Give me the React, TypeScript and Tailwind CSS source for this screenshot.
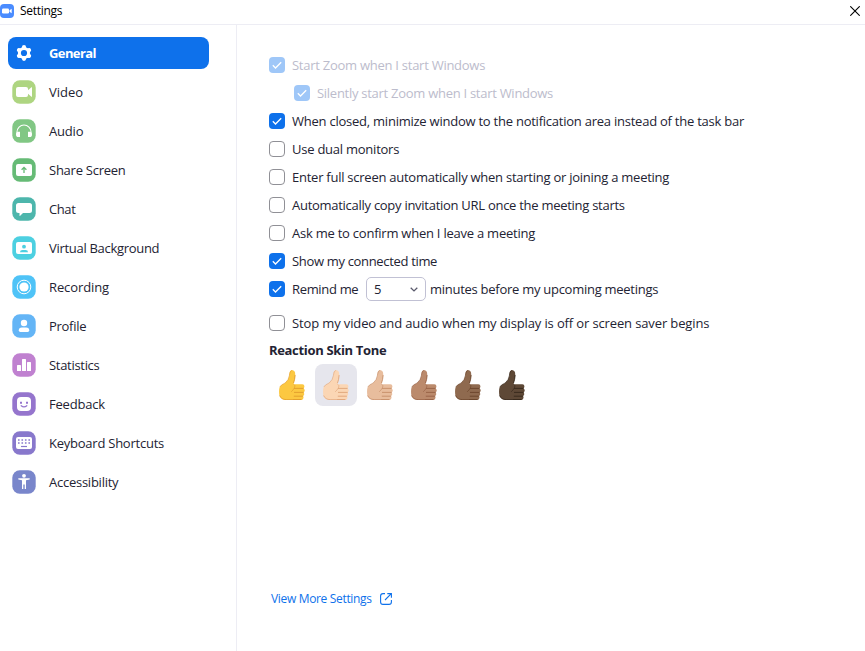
import type { ReactNode } from 'react';

const W = '#fff';

type NavItem = { label: string; color: string; tracking: string; icon: ReactNode };

const navItems: NavItem[] = [
  {
    label: 'Video', color: '#aed581', tracking: 'tracking-normal',
    icon: (
      <>
        <rect x="4" y="7" width="12" height="10" rx="2" fill={W} />
        <path d="M16 10.300 19.400 7.300Q20 7 20 7.600v8.800q0 .6-.6.3L16 13.700z" fill={W} />
      </>
    ),
  },
  {
    label: 'Audio', color: '#81c784', tracking: 'tracking-[-0.2px]',
    icon: (
      <>
        <path d="M5 15.500V13a7 7 0 0 1 14 0v2.500" fill="none" stroke={W} strokeWidth="1.100" />
        <path d="M8 12.700v5.300H6.500Q4 18 4 15.400 4 12.700 6.500 12.700zM16 12.700v5.300h1.500q2.500 0 2.500-2.600 0-2.700-2.500-2.700z" fill={W} />
      </>
    ),
  },
  {
    label: 'Share Screen', color: '#66bb76', tracking: 'tracking-[-0.25px]',
    icon: (
      <>
        <rect x="4" y="6" width="16" height="12" rx="2" fill={W} />
        <path d="M12 15v-5.300M9.600 11.800 12 9.500l2.400 2.300" fill="none" stroke="#66bb76" strokeWidth="1.300" />
      </>
    ),
  },
  {
    label: 'Chat', color: '#4db6ac', tracking: 'tracking-[-0.4px]',
    icon: <path d="M6.500 6h11Q20 6 20 8.500v5q0 2.500-2.500 2.500H11l-2.800 2.700Q7.500 19.200 7.500 18.400V16h-1Q4 16 4 13.500v-5Q4 6 6.500 6z" fill={W} />,
  },
  {
    label: 'Virtual Background', color: '#4dd0e1', tracking: 'tracking-[-0.3px]',
    icon: (
      <>
        <rect x="4" y="6" width="16" height="12" rx="2" fill={W} />
        <circle cx="12" cy="10.700" r="1.900" fill="#4dd0e1" />
        <path d="M8 16.300q0-2.300 2.500-2.300h3q2.500 0 2.500 2.300z" fill="#4dd0e1" />
      </>
    ),
  },
  {
    label: 'Recording', color: '#4fc3f7', tracking: 'tracking-[-0.1px]',
    icon: (
      <>
        <circle cx="12" cy="12" r="6.800" fill="none" stroke={W} strokeWidth="1" />
        <circle cx="12" cy="12" r="4.600" fill={W} />
      </>
    ),
  },
  {
    label: 'Profile', color: '#64b5f6', tracking: 'tracking-[-0.28px]',
    icon: (
      <>
        <circle cx="12" cy="9" r="3.200" fill={W} />
        <path d="M6.800 16.200q0-2.700 3-2.700h4.400q3 0 3 2.700 0 1.800-1.500 1.800H8.300q-1.500 0-1.500-1.800z" fill={W} />
      </>
    ),
  },
  {
    label: 'Statistics', color: '#c081d0', tracking: 'tracking-[-0.3px]',
    icon: (
      <>
        <rect x="5" y="12" width="4" height="6" rx=".6" fill={W} />
        <rect x="10" y="6" width="4" height="12" rx=".6" fill={W} />
        <rect x="15" y="9" width="4" height="9" rx=".6" fill={W} />
      </>
    ),
  },
  {
    label: 'Feedback', color: '#9575cd', tracking: 'tracking-[-0.2px]',
    icon: (
      <>
        <rect x="5" y="5" width="14" height="14" rx="4" fill={W} />
        <path d="M8 9.800h2v2H8zM14 9.800h2v2h-2z" fill="#9575cd" />
        <path d="M9.200 13.700q2.800 2.400 5.600 0" fill="none" stroke="#9575cd" strokeWidth="1.200" strokeLinecap="round" />
      </>
    ),
  },
  {
    label: 'Keyboard Shortcuts', color: '#8878cc', tracking: 'tracking-[-0.24px]',
    icon: (
      <>
        <rect x="4" y="6" width="16" height="12" rx="2" fill={W} />
        <path d="M6 9h12M6 12h12" stroke="#8878cc" strokeWidth="1.500" strokeDasharray="1.600 1.870" />
        <path d="M9 15.500h6" stroke="#8878cc" strokeWidth="1.200" />
      </>
    ),
  },
  {
    label: 'Accessibility', color: '#7986cb', tracking: 'tracking-[-0.25px]',
    icon: (
      <>
        <circle cx="12" cy="5.800" r="1.900" fill={W} />
        <path d="M6.300 8.300h11.400v1.200l-3.700.8v8.700h-1.300v-4.500h-1.400V19H10v-8.700l-3.700-.8z" fill={W} />
      </>
    ),
  },
];

const tones = [
  { fill: '#fcc841', line: '#e09b2d' },
  { fill: '#fbd6b4', line: '#dfa478' },
  { fill: '#e8bd9d', line: '#c58d68' },
  { fill: '#bb8a6c', line: '#966044' },
  { fill: '#8f6a4f', line: '#694329' },
  { fill: '#5e4836', line: '#35271b' },
];

function Thumb({ fill, line }: { fill: string; line: string }) {
  return (
    <svg width="26" height="30" viewBox="0 0 26 30">
      <path
        d="M13 .1Q16.600.4 16.200 5.500 15.900 9.500 14.800 12.600l-.1 1.700h8.700q2.200.2 2 2.200-.1 1.400-1 1.900 1.500.7 1.300 2.300-.2 1.300-1.200 1.800 1 .8.700 2.100-.3 1.100-1.200 1.500.6.6.500 1.700-.3 2.200-2.500 2.300H7.500Q1.600 29.900.4 25.500-.4 20.500.6 17.200 1.800 14.900 5.800 13.200 9.500 10.500 10.200 6.500 10.400 0 13 .1z"
        fill={fill}
      />
      <path d="M16.100 5.500Q15.900 9.500 14.600 12.800M15.400 18.400h8.800M15.400 22.400h8.900M15.200 26.200h8.300M14.500 29.500h7.500" fill="none" stroke={line} strokeWidth=".9" strokeLinecap="round" />
      <path d="M14.700 14.300q2.200 1.200.7 3.600-1 2-3.300 4M12.800.400Q10.700.8 10.400 5.500 9.800 10 6.300 12.900 1.800 14.800.8 17" fill="none" stroke={line} strokeWidth=".6" />
      <path d="M.6 25.500q1.700 4.100 6.700 4.100h7.200" fill="none" stroke={line} strokeWidth=".7" />
    </svg>
  );
}

function Box({ checked, disabled }: { checked?: boolean; disabled?: boolean }) {
  if (!checked) return <span className="size-4 shrink-0 rounded-[4px] border border-[#909096] bg-white" />;
  return (
    <span className={`flex size-4 shrink-0 rounded-[4px] ${disabled ? 'bg-[#9fc7f8]' : 'bg-[#0e71eb]'}`}>
      <svg width="16" height="16" viewBox="0 0 16 16">
        <path d="m3.800 8.300 2.700 2.700 5.700-5.800" fill="none" stroke={W} strokeWidth="1.300" />
      </svg>
    </span>
  );
}

function Option({ label, checked, disabled, className }: { label: string; checked?: boolean; disabled?: boolean; className: string }) {
  return (
    <label className={`flex h-7 items-center gap-[7px] whitespace-nowrap ${disabled ? 'text-[#bcbccc]' : ''} ${className}`}>
      <Box checked={checked} disabled={disabled} />
      <span>{label}</span>
    </label>
  );
}

export default function App() {
  return (
    <div className="flex h-[651px] w-[865px] flex-col overflow-hidden bg-white font-['Open_Sans',sans-serif] text-[13px] leading-5 text-[#232333]">
      <header className="flex h-[25px] shrink-0 items-center border-b border-[#ededf4] pb-[3px] text-black">
        <svg width="14" height="14" viewBox="0 0 14 14">
          <rect width="14" height="14" rx="4" fill="#4a8cff" />
          <rect x="2" y="4.500" width="7" height="5" rx="1.300" fill={W} />
          <path d="m9.500 6.300 2.200-1.600v4.600L9.500 7.700z" fill={W} />
        </svg>
        <h1 className="ml-1.5 text-[12px] tracking-[-0.3px]">Settings</h1>
        <svg className="ml-auto mr-[5px]" width="10" height="10" viewBox="0 0 10 10">
          <path d="m.3.300 9.400 9.400M9.700.300.300 9.700" stroke="#000" strokeWidth="1.100" />
        </svg>
      </header>
      <div className="flex min-h-0 flex-1">
        <nav className="flex w-[237px] shrink-0 flex-col gap-[7px] border-r border-[#ededf4] pl-2 pt-3">
          <a className="flex h-8 w-[201px] items-center gap-[13px] rounded-lg bg-[#0e71eb] pl-1 font-bold text-white">
            <svg width="24" height="24" viewBox="0 0 24 24">
              <circle cx="12" cy="12" r="6.100" fill={W} />
              <path d="M12 6.200v11.600M7 9.100l10 5.800M7 14.900l10-5.800" stroke={W} strokeWidth="4.200" strokeLinecap="round" />
              <circle cx="12" cy="12" r="3.100" fill="#0e71eb" />
            </svg>
            <span className="tracking-[-0.6px]">General</span>
          </a>
          {navItems.map((item) => (
            <a key={item.label} className="flex h-8 w-[201px] items-center gap-[13px] pl-1">
              <svg width="24" height="24" viewBox="0 0 24 24">
                <rect x=".3" y=".3" width="23.400" height="23.400" rx="7.500" fill={item.color} />
                {item.icon}
              </svg>
              <span className={item.tracking}>{item.label}</span>
            </a>
          ))}
        </nav>
        <main className="flex flex-1 flex-col pl-8 pt-[26px]">
          <Option checked disabled label="Start Zoom when I start Windows" className="tracking-[-0.26px]" />
          <Option checked disabled label="Silently start Zoom when I start Windows" className="ml-[25px] tracking-[-0.275px]" />
          <Option checked label="When closed, minimize window to the notification area instead of the task bar" className="tracking-[-0.238px]" />
          <Option label="Use dual monitors" className="tracking-[-0.24px]" />
          <Option label="Enter full screen automatically when starting or joining a meeting" className="tracking-[-0.25px]" />
          <Option label="Automatically copy invitation URL once the meeting starts" className="tracking-[-0.275px]" />
          <Option label="Ask me to confirm when I leave a meeting" className="tracking-[-0.235px]" />
          <Option checked label="Show my connected time" className="tracking-[-0.33px]" />
          <div className="flex h-7 items-center whitespace-nowrap">
            <Option checked label="Remind me" className="w-[97px] tracking-[-0.33px]" />
            <button className="flex h-6 w-[60px] items-center justify-between rounded-[5px] border border-[#c1c1d4] pl-[7px] pr-[7px]">
              <span>5</span>
              <svg width="8" height="5" viewBox="0 0 8 5">
                <path d="m.7.700 3.300 3.200L7.300.700" fill="none" stroke="#5a5a6c" strokeWidth="1.300" />
              </svg>
            </button>
            <span className="ml-1 tracking-[-0.27px]">minutes before my upcoming meetings</span>
          </div>
          <Option label="Stop my video and audio when my display is off or screen saver begins" className="mt-1.5 tracking-[-0.13px]" />
          <h2 className="mt-[3px] font-bold tracking-[-0.33px]">Reaction Skin Tone</h2>
          <div className="ml-0.5 mt-1 flex gap-0.5">
            {tones.map((tone, i) => (
              <button key={tone.fill} className={`flex size-[42px] items-center justify-center rounded-lg ${i === 1 ? 'bg-[#e6e6ed]' : ''}`}>
                <Thumb fill={tone.fill} line={tone.line} />
              </button>
            ))}
          </div>
          <a className="ml-0.5 mt-[183px] flex items-center text-[12px] text-[#0e71eb]">
            <span className="tracking-[-0.33px]">View More Settings</span>
            <svg className="ml-2" width="12" height="12" viewBox="0 0 12 12" fill="none" stroke="#0e71eb" strokeWidth="1.100">
              <path d="M5 .6H3Q.6.600.6 3v6q0 2.400 2.400 2.400h6q2.400 0 2.400-2.400V7M7.300.6h4.100v4.100M11.300.7 5 7" />
            </svg>
          </a>
        </main>
      </div>
    </div>
  );
}
